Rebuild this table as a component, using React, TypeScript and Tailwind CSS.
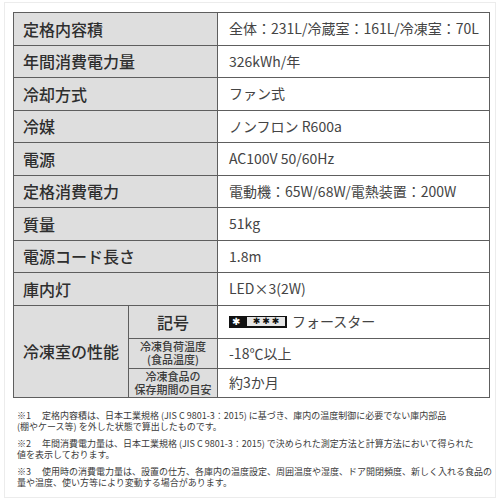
import React from "react";

// spec rows (label, value)
const specRows: [string, string][] = [
  ["定格内容積", "全体：231L/冷蔵室：161L/冷凍室：70L"],
  ["年間消費電力量", "326kWh/年"],
  ["冷却方式", "ファン式"],
  ["冷媒", "ノンフロン R600a"],
  ["電源", "AC100V 50/60Hz"],
  ["定格消費電力", "電動機：65W/68W/電熱装置：200W"],
  ["質量", "51kg"],
  ["電源コード長さ", "1.8m"],
  ["庫内灯", "LED×3(2W)"],
];

const notes: { mark: string; lines: string[] }[] = [
  {
    mark: "※1",
    lines: [
      "定格内容積は、日本工業規格 (JIS C 9801-3：2015) に基づき、庫内の温度制御に必要でない庫内部品",
      "(棚やケース等) を外した状態で算出したものです。",
    ],
  },
  {
    mark: "※2",
    lines: [
      "年間消費電力量は、日本工業規格 (JIS C 9801-3：2015) で決められた測定方法と計算方法において得られた",
      "値を表示しております。",
    ],
  },
  {
    mark: "※3",
    lines: [
      "使用時の消費電力量は、設置の仕方、各庫内の温度設定、周囲温度や湿度、ドア開閉頻度、新しく入れる食品の",
      "量や温度、使い方等により変動する場合があります。",
    ],
  },
];

const labelCls =
  "border border-[#5e5e5e] bg-[#dedede] text-[#2e2e2e] font-medium text-[16px] pl-[9px] align-middle";
const valueCls =
  "border border-[#5e5e5e] bg-white text-[#444] text-[14px] pl-[11px] align-middle whitespace-nowrap";
const subCls =
  "border border-[#5e5e5e] bg-[#dedede] text-[#3a3a3a] font-medium text-[11px] leading-[13px] text-center align-middle whitespace-nowrap";

const FreezerMark = () => (
  <span
    className="inline-flex items-center justify-between bg-[#111] w-[58px] h-[12px] pl-[3px] pr-[2px]"
    style={{ fontFamily: '"DejaVu Sans", sans-serif' }}
  >
    <span className="text-white text-[10px] leading-none">✱</span>
    <span className="bg-[#e6e6e6] text-[#111] text-[9px] leading-none w-[38px] h-[9px] flex items-center justify-center gap-[2px]">
      <span>✱</span>
      <span>✱</span>
      <span>✱</span>
    </span>
  </span>
);

export default function App() {
  return (
    <div
      className="w-[500px] h-[500px] bg-white pt-[2px] pl-[4px]"
      style={{ fontFamily: '"Noto Sans CJK JP", "Noto Sans", sans-serif' }}
    >
      <div className="w-[492px] h-[496px] border border-[#ececec] pt-[9px] pl-[8px]">
        <table className="table-fixed border-collapse w-[476px]">
          <colgroup>
            <col className="w-[115px]" />
            <col className="w-[89px]" />
            <col className="w-[272px]" />
          </colgroup>
          <tbody>
            {specRows.map(([label, value]) => (
              <tr key={label} className="h-[32.5px]">
                <td colSpan={2} className={labelCls}>
                  {label}
                </td>
                <td className={valueCls}>{value}</td>
              </tr>
            ))}
            <tr className="h-[33px]">
              <td rowSpan={3} className={labelCls}>
                冷凍室の性能
              </td>
              <td className="border border-[#5e5e5e] bg-[#dedede] text-[#2e2e2e] font-medium text-[16px] text-center align-middle">
                記号
              </td>
              <td className={valueCls}>
                <div className="flex items-center">
                  <FreezerMark />
                  <span className="ml-[5px]">フォースター</span>
                </div>
              </td>
            </tr>
            <tr className="h-[30px]">
              <td className={subCls}>
                冷凍負荷温度
                <br />
                (食品温度)
              </td>
              <td className={valueCls}>-18℃以上</td>
            </tr>
            <tr className="h-[29px]">
              <td className={subCls}>
                冷凍食品の
                <br />
                保存期間の目安
              </td>
              <td className={valueCls}>約3か月</td>
            </tr>
          </tbody>
        </table>

        <div className="mt-[12px] pl-[4px] text-[9px] leading-[11px] text-[#3a3a3a] whitespace-nowrap">
          {notes.map((n) => (
            <div key={n.mark} className="mb-[6px]">
              <div>
                <span className="inline-block w-[25px]">{n.mark}</span>
                {n.lines[0]}
              </div>
              <div>{n.lines[1]}</div>
            </div>
          ))}
        </div>
      </div>
    </div>
  );
}
